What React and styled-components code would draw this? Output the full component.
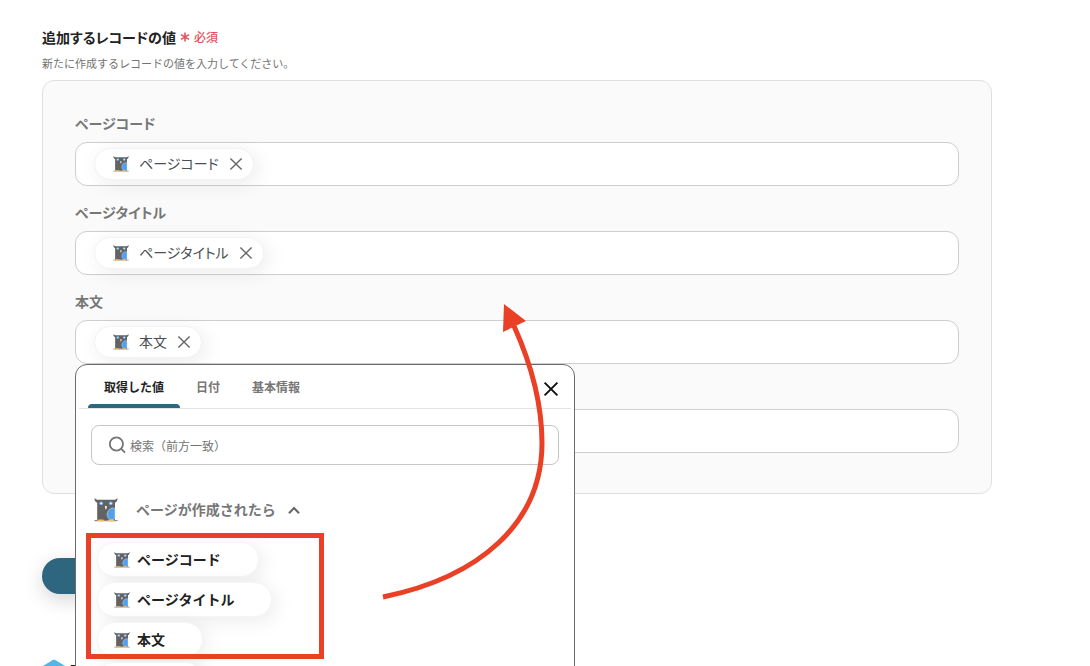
import React from "react";
import styled, { createGlobalStyle } from "styled-components";

/* -------------------------------------------------------------------------- */
/*                                    Data                                    */
/* -------------------------------------------------------------------------- */
const fields = [
    { id: "code", label: "ページコード", tag: "ページコード" },
    { id: "title", label: "ページタイトル", tag: "ページタイトル" },
    { id: "body", label: "本文", tag: "本文", open: true },
    { id: "extra" },
];

const tabs = ["取得した値", "日付", "基本情報"];

const values = [
    { name: "ページコード", width: "162px" },
    { name: "ページタイトル", width: "175px" },
    { name: "本文", width: "106px" },
];

/* -------------------------------------------------------------------------- */
/*                                    Icons                                   */
/* -------------------------------------------------------------------------- */
const OwlIcon = ({ size }) => (
    <svg width={size} height={size} viewBox="0 0 24 24" aria-hidden="true">
        <path
            d="M0.6 0 C1.6 1.4 3 1.8 5 1.8 H19 C21 1.8 22.4 1.4 23.4 0 C23.6 2.6 22.6 4 21 4.6 V22 H3.2 V4.6 C1.4 4 0.4 2.6 0.6 0 Z"
            fill="#636363"
        />
        <circle cx="7.2" cy="5.3" r="1.9" fill="#6fb2ee" />
        <circle cx="16.8" cy="5.3" r="1.9" fill="#6fb2ee" />
        <circle cx="7.2" cy="5.3" r="0.9" fill="#fff" />
        <circle cx="16.8" cy="5.3" r="0.9" fill="#fff" />
        <path d="M11 8 H12.8 L12.5 10.8 L11.9 11.4 L11.3 10.8 Z" fill="#fff" />
        <path
            d="M21 10.6 C19.6 9.6 17.4 9.8 15.6 11.4 C13.4 13.4 12.6 16.4 13.6 18.8 C14.6 21 17.2 22.2 19.4 21.6 L21 20.4 Z"
            fill="#529fec"
            stroke="#cfe4f7"
            strokeWidth="0.6"
        />
        <path d="M0.4 22 H23.6 V23.2 H0.4 Z" fill="#8c8c8c" />
        <path
            d="M3.6 23.4 C3.6 21.4 5.2 21 6 21.8 C6.6 21 7.6 21 8 21.8 C9 21.2 10 21.8 10 23.4 Z M13.6 23.4 C13.6 21.4 15.2 21 16 21.8 C16.6 21 17.6 21 18 21.8 C19 21.2 20 21.8 20 23.4 Z"
            fill="#f4c265"
        />
    </svg>
);

const CrossIcon = ({ size, weight }) => (
    <svg width={size} height={size} viewBox="0 0 14 14" aria-hidden="true">
        <path
            d="M1.4 1.4 L12.6 12.6 M12.6 1.4 L1.4 12.6"
            stroke="currentColor"
            strokeWidth={weight}
            fill="none"
        />
    </svg>
);

const SearchIcon = () => (
    <svg width="18" height="18" viewBox="0 0 18 18" aria-hidden="true">
        <g stroke="#737373" strokeWidth="1.8" fill="none">
            <circle cx="8.4" cy="8" r="6.6" />
            <path d="M13 12.6 L17 16.6" />
        </g>
    </svg>
);

const ChevronUpIcon = () => (
    <svg width="12" height="8" viewBox="0 0 12 8" aria-hidden="true">
        <path d="M1 7.2 L6 2 L11 7.2" stroke="#666" strokeWidth="2" fill="none" />
    </svg>
);

const AsteriskIcon = () => (
    <svg width="10" height="10" viewBox="0 0 10 10" aria-hidden="true">
        <path
            d="M5 0.5 V9.5 M1 2.6 L9 7.4 M9 2.6 L1 7.4"
            stroke="#e8505b"
            strokeWidth="1.6"
        />
    </svg>
);

const HexIcon = () => (
    <svg width="24" height="24" viewBox="0 0 24 24" aria-hidden="true">
        <path
            d="M12 2 L22 8 V17 L12 22 L2 17 V8 Z"
            fill="#55b5e4"
            stroke="#55b5e4"
            strokeWidth="3"
            strokeLinejoin="round"
        />
    </svg>
);

/* -------------------------------------------------------------------------- */
/*                                 Components                                 */
/* -------------------------------------------------------------------------- */
const ValuePicker = () => (
    <Picker>
        <TabBar role="tablist">
            {tabs.map((tab, i) => (
                <Tab key={tab} type="button" role="tab" $active={i === 0}>
                    {tab}
                </Tab>
            ))}
            <CloseButton type="button" aria-label="閉じる">
                <CrossIcon size={16} weight={1.7} />
            </CloseButton>
        </TabBar>
        <SearchBox>
            <SearchIcon />
            <SearchInput
                type="search"
                aria-label="検索"
                placeholder="検索（前方一致）"
            />
        </SearchBox>
        <GroupButton type="button" aria-expanded="true">
            <OwlIcon size={24} />
            <GroupName>ページが作成されたら</GroupName>
            <ChevronUpIcon />
        </GroupButton>
        <ValueList>
            {values.map(({ name, width }) => (
                <ValueButton key={name} type="button" $width={width}>
                    <OwlIcon size={16} />
                    <ValueName>{name}</ValueName>
                </ValueButton>
            ))}
            <ValueButton type="button" aria-label="その他" $width="106px" />
        </ValueList>
    </Picker>
);

const RecordField = ({ id, label, tag, open }) => (
    <Field>
        <FieldLabel htmlFor={id}>{label}</FieldLabel>
        <FieldBox>
            {tag && (
                <Tag>
                    <OwlIcon size={16} />
                    <TagName>{tag}</TagName>
                    <TagRemove type="button" aria-label={`${tag}を削除`}>
                        <CrossIcon size={14} weight={1.4} />
                    </TagRemove>
                </Tag>
            )}
            <FieldInput id={id} type="text" aria-label={label ? undefined : "値"} />
            {open && <ValuePicker />}
        </FieldBox>
    </Field>
);

const App = () => (
    <Page>
        <GlobalStyle />
        <Heading>
            追加するレコードの値
            <Required>
                <AsteriskIcon />
                必須
            </Required>
        </Heading>
        <Description>新たに作成するレコードの値を入力してください。</Description>
        <Panel>
            {fields.map((field) => (
                <RecordField key={field.id} {...field} />
            ))}
        </Panel>
        <SubmitButton type="button" aria-label="保存する" />
        <NextStep>
            <HexIcon />
            取得
        </NextStep>
        <Annotation aria-hidden="true">
            <rect x="88.5" y="535.5" width="233" height="121" />
            <path d="M383 597 C480 577 542 523 542 443 C542 405 532 366 514 326" />
            <polygon points="504,304 503,332 526,321" />
        </Annotation>
    </Page>
);

/* -------------------------------------------------------------------------- */
/*                                   Styles                                   */
/* -------------------------------------------------------------------------- */
const GlobalStyle = createGlobalStyle`
    * {
        box-sizing: border-box;
    }
    body {
        margin: 0;
        background: #fff;
        color: #222;
        font-family: "Noto Sans CJK JP", sans-serif;
    }
    button,
    input {
        margin: 0;
        padding: 0;
        border: 0;
        background: none;
        color: inherit;
        font-family: inherit;
    }
    button {
        cursor: pointer;
    }
    svg {
        flex-shrink: 0;
    }
`;

const Page = styled.main`
    position: relative;
    height: 100vh;
    overflow: hidden;
    padding: 27px 98px 0 42px;
`;

const Heading = styled.h1`
    display: flex;
    align-items: center;
    gap: 4px;
    margin: 0;
    font-size: 14px;
    line-height: 20px;
    font-weight: 700;
    font-feature-settings: "palt";
`;

const Required = styled.span`
    display: flex;
    align-items: center;
    gap: 4px;
    color: #e8505b;
    font-size: 12px;
    font-weight: 500;
`;

const Description = styled.p`
    margin: 6px 0 7px;
    color: #737373;
    font-size: 11px;
    line-height: 20px;
`;

const Panel = styled.section`
    display: flex;
    flex-direction: column;
    gap: 16px;
    padding: 32px 32px 40px;
    border: 1px solid #dfe0e2;
    border-radius: 12px;
    background: #fafafa;
`;

const Field = styled.div`
    display: flex;
    flex-direction: column;
    gap: 8px;
`;

const FieldLabel = styled.label`
    height: 21px;
    color: #777;
    font-size: 14px;
    line-height: 20px;
    font-weight: 700;
    font-feature-settings: "palt";
`;

const FieldBox = styled.div`
    position: relative;
    display: flex;
    align-items: center;
    height: 44px;
    padding: 0 18px;
    border: 1px solid #cbced2;
    border-radius: 12px;
    background: #fff;
`;

const FieldInput = styled.input`
    flex: 1;
    min-width: 0;
    height: 100%;
    outline: none;
    font-size: 14px;
`;

const Tag = styled.span`
    display: flex;
    align-items: center;
    height: 32px;
    padding: 0 10px 0 18px;
    border: 1px solid #f3f3f3;
    border-radius: 16px;
    background: #fff;
    box-shadow: 4px 4px 20px rgba(0, 0, 0, 0.08);
    color: #494f55;
`;

const TagName = styled.span`
    margin: 0 10px;
    padding-bottom: 2px;
    font-size: 14px;
    line-height: 20px;
    font-feature-settings: "palt";
`;

const TagRemove = styled.button`
    display: flex;
    color: #666;
`;

const Picker = styled.div`
    position: absolute;
    z-index: 2;
    top: calc(100% + 1px);
    left: -1px;
    width: 500px;
    padding: 0 3px;
    border: 1px solid #6b6b6b;
    border-radius: 12px;
    background: #fff;
`;

const TabBar = styled.div`
    display: flex;
    height: 44px;
    padding: 0 12px 0 9px;
    border-bottom: 1px solid #e2e2e2;
`;

const Tab = styled.button`
    position: relative;
    padding: 0 16px;
    color: ${({ $active }) => ($active ? "#222" : "#777")};
    font-size: 12px;
    font-weight: 700;
    &::after {
        content: "";
        position: absolute;
        right: 0;
        bottom: 0;
        left: 0;
        height: 4px;
        border-radius: 4px 4px 0 0;
        background: ${({ $active }) => ($active ? "#2e6680" : "transparent")};
    }
`;

const CloseButton = styled.button`
    display: flex;
    align-items: center;
    margin-left: auto;
    padding-top: 4px;
    color: #111;
`;

const SearchBox = styled.div`
    display: flex;
    align-items: center;
    gap: 4px;
    height: 40px;
    margin: 16px 12px 0;
    padding: 0 16px;
    border: 1px solid #c6c6c6;
    border-radius: 8px;
`;

const SearchInput = styled.input`
    flex: 1;
    outline: none;
    font-size: 12px;
    &::placeholder {
        color: #737373;
    }
`;

const GroupButton = styled.button`
    display: flex;
    align-items: center;
    margin: 33px 0 0 15px;
    color: #777;
`;

const GroupName = styled.span`
    margin: 0 12px 0 18px;
    padding-bottom: 2px;
    font-size: 14px;
    line-height: 22px;
    font-weight: 700;
`;

const ValueList = styled.div`
    display: flex;
    flex-direction: column;
    gap: 5px;
    padding: 20px 18px 16px;
`;

const ValueButton = styled.button`
    display: flex;
    align-items: center;
    gap: 7px;
    width: ${({ $width }) => $width};
    height: 35px;
    padding: 0 16px;
    border: 1px solid #f5f5f5;
    border-radius: 18px;
    background: #fff;
    box-shadow: 4px 4px 20px rgba(0, 0, 0, 0.08);
`;

const ValueName = styled.span`
    padding-bottom: 2px;
    font-size: 14px;
    line-height: 20px;
    font-weight: 700;
`;

const SubmitButton = styled.button`
    display: block;
    width: 160px;
    height: 36px;
    margin-top: 64px;
    border-radius: 18px;
    background: #2e6680;
    box-shadow: 0 6px 20px rgba(0, 0, 0, 0.16);
`;

const NextStep = styled.div`
    display: flex;
    align-items: center;
    gap: 4px;
    margin-top: 65px;
    height: 24px;
    font-size: 16px;
    font-weight: 700;
`;

const Annotation = styled.svg`
    position: absolute;
    z-index: 3;
    top: 0;
    left: 0;
    width: 100%;
    height: 100%;
    pointer-events: none;
    rect,
    path {
        fill: none;
        stroke: #ea4025;
        stroke-width: 5px;
    }
    polygon {
        fill: #ea4025;
    }
`;

export default App;
